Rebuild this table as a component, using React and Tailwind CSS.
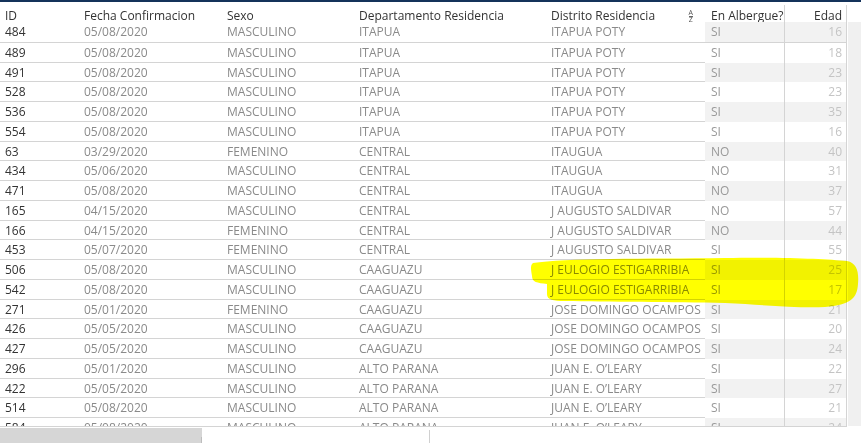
import React from "react";

const rows = [
  ["484", "05/08/2020", "MASCULINO", "ITAPUA", "ITAPUA POTY", "SI", "16"],
  ["489", "05/08/2020", "MASCULINO", "ITAPUA", "ITAPUA POTY", "SI", "18"],
  ["491", "05/08/2020", "MASCULINO", "ITAPUA", "ITAPUA POTY", "SI", "23"],
  ["528", "05/08/2020", "MASCULINO", "ITAPUA", "ITAPUA POTY", "SI", "23"],
  ["536", "05/08/2020", "MASCULINO", "ITAPUA", "ITAPUA POTY", "SI", "35"],
  ["554", "05/08/2020", "MASCULINO", "ITAPUA", "ITAPUA POTY", "SI", "16"],
  ["63", "03/29/2020", "FEMENINO", "CENTRAL", "ITAUGUA", "NO", "40"],
  ["434", "05/06/2020", "MASCULINO", "CENTRAL", "ITAUGUA", "NO", "31"],
  ["471", "05/08/2020", "MASCULINO", "CENTRAL", "ITAUGUA", "NO", "37"],
  ["165", "04/15/2020", "MASCULINO", "CENTRAL", "J AUGUSTO SALDIVAR", "NO", "57"],
  ["166", "04/15/2020", "FEMENINO", "CENTRAL", "J AUGUSTO SALDIVAR", "NO", "44"],
  ["453", "05/07/2020", "FEMENINO", "CENTRAL", "J AUGUSTO SALDIVAR", "SI", "55"],
  ["506", "05/08/2020", "MASCULINO", "CAAGUAZU", "J EULOGIO ESTIGARRIBIA", "SI", "25"],
  ["542", "05/08/2020", "MASCULINO", "CAAGUAZU", "J EULOGIO ESTIGARRIBIA", "SI", "17"],
  ["271", "05/01/2020", "FEMENINO", "CAAGUAZU", "JOSE DOMINGO OCAMPOS", "SI", "21"],
  ["426", "05/05/2020", "MASCULINO", "CAAGUAZU", "JOSE DOMINGO OCAMPOS", "SI", "20"],
  ["427", "05/05/2020", "MASCULINO", "CAAGUAZU", "JOSE DOMINGO OCAMPOS", "SI", "24"],
  ["296", "05/01/2020", "MASCULINO", "ALTO PARANA", "JUAN E. O’LEARY", "SI", "22"],
  ["422", "05/05/2020", "MASCULINO", "ALTO PARANA", "JUAN E. O’LEARY", "SI", "27"],
  ["514", "05/08/2020", "MASCULINO", "ALTO PARANA", "JUAN E. O’LEARY", "SI", "21"],
  ["584", "05/08/2020", "MASCULINO", "ALTO PARANA", "JUAN E. O’LEARY", "SI", "24"],
];

const cols = "grid grid-cols-[79px_143px_132px_192px_159px_80px_62px]";

// tiny A-Z sort glyph next to the Distrito header
const SortIcon = () => (
  <span className="flex flex-col items-center leading-[5px] text-[7px] text-[#555] mt-[1px]">
    <span>A</span>
    <span className="h-[1px] w-[4px] bg-[#666] my-[0.5px]" />
    <span>Z</span>
  </span>
);

export default function App() {
  return (
    <div
      className="relative w-[861px] h-[443px] overflow-hidden bg-white"
      style={{ fontFamily: '"Open Sans", "Noto Sans", sans-serif' }}
    >
      <div className="h-[2px] bg-[#14325a]" />
      <div className="flex h-[424px]">
        <div className="w-[847px] overflow-hidden">
          {/* header */}
          <div className={`${cols} h-[20px] text-[12px] text-[#333] whitespace-nowrap`}>
            <div className="pl-[5px] pt-[7px] leading-[13px]">ID</div>
            <div className="pl-[5px] pt-[7px] leading-[13px]">Fecha Confirmacion</div>
            <div className="pl-[5px] pt-[7px] leading-[13px]">Sexo</div>
            <div className="pl-[5px] pt-[7px] leading-[13px]">Departamento Residencia</div>
            <div className="pl-[5px] pr-[12px] pt-[7px] leading-[13px] flex justify-between">
              <span>Distrito Residencia</span>
              <SortIcon />
            </div>
            <div className="mt-[3px] pl-[6px] pt-[4px] leading-[13px] border-r border-[#d4d4d4]">
              En Albergue?
            </div>
            <div className="mt-[3px] pr-[4px] pt-[4px] leading-[13px] text-right border-r border-[#d4d4d4]">
              Edad
            </div>
          </div>
          {/* rows */}
          {rows.map((r, i) => (
            <div
              key={r[0] + i}
              className={`${cols} h-[19.75px] text-[12px] leading-[20px] whitespace-nowrap ${
                i === 0 ? "" : "border-t border-[#d4d4d4]"
              }`}
            >
              <div className="pl-[5px] text-[#333]">{r[0]}</div>
              <div className="pl-[5px] text-[#8a8a8a]">{r[1]}</div>
              <div className="pl-[5px] text-[#8a8a8a]">{r[2]}</div>
              <div className="pl-[5px] text-[#8a8a8a]">{r[3]}</div>
              <div className="pl-[5px] text-[#8a8a8a]">{r[4]}</div>
              <div
                className={`pl-[6px] text-[#999] border-r border-[#d4d4d4] ${
                  i % 2 === 0 ? "bg-[#f2f2f2]" : "bg-white"
                }`}
              >
                {r[5]}
              </div>
              <div
                className={`pr-[4px] text-right text-[#c4c4c4] border-r border-[#d4d4d4] ${
                  i % 2 === 0 ? "bg-[#f2f2f2]" : "bg-white"
                }`}
              >
                {r[6]}
              </div>
            </div>
          ))}
        </div>
        <div className="flex-1 flex flex-col">
          <div className="h-[20px] bg-white" />
          <div className="flex-1 bg-[#f0f0f0] ml-[1px]" />
        </div>
      </div>
      {/* horizontal scrollbar */}
      <div className="flex h-[17px] border-t border-[#d4d4d4] w-[847px]">
        <div className="w-[202px] bg-[#d6d6d6] mt-[1px] flex justify-end items-end">
          <div className="w-[1px] h-[6px] bg-[#bdbdbd]" />
        </div>
        <div className="w-[227px]" />
        <div className="w-[1px] mt-[3px] bg-[#d0d0d0]" />
      </div>
      {/* marker highlight drawn over the table */}
      <svg
        className="absolute left-[525px] top-[250px] mix-blend-multiply pointer-events-none"
        width="336"
        height="62"
        viewBox="0 0 336 62"
      >
        <path
          d="M8 13 C40 8 120 9 200 8 C260 7 300 9 322 11 C332 13 334 22 333 34 C332 48 326 55 300 57 C270 58 240 55 200 53 C150 52 80 52 40 51 C28 51 22 50 22 44 L22 34 C12 33 7 32 7 26 C6 20 5 15 8 13 Z"
          fill="#ffff00"
        />
      </svg>
    </div>
  );
}
